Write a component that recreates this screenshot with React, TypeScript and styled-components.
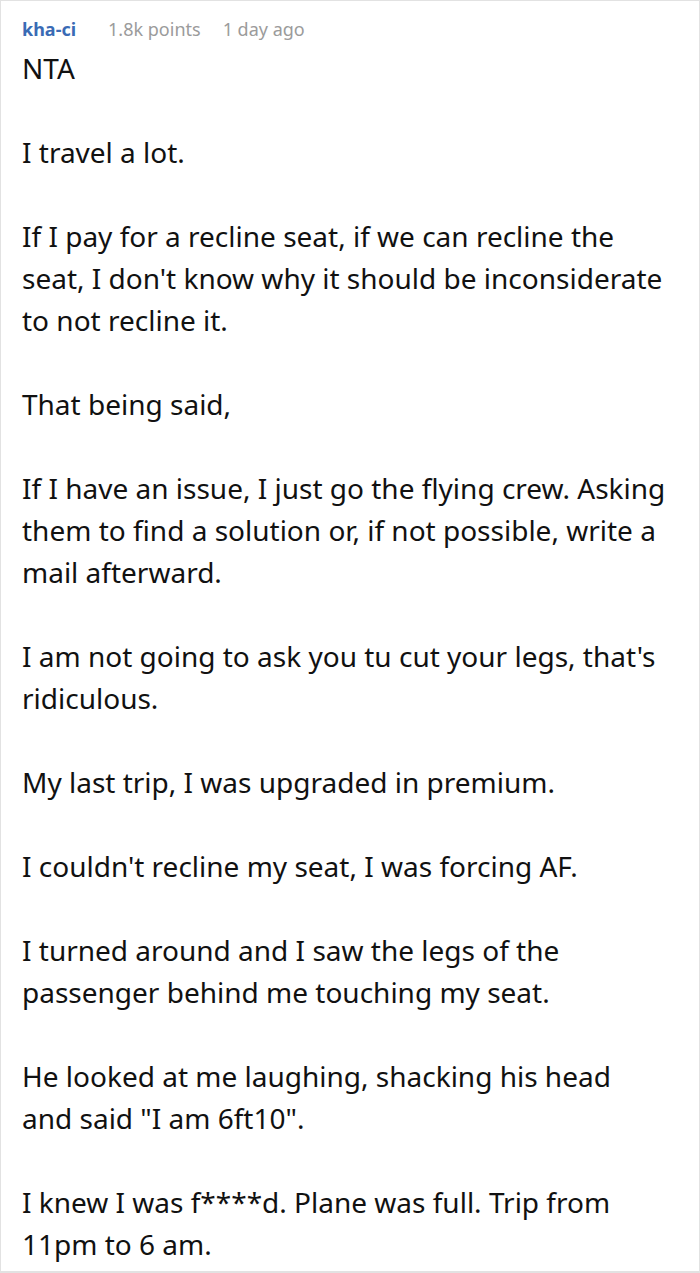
import React from "react";
import styled, { createGlobalStyle } from "styled-components";

const GlobalStyle = createGlobalStyle`
  html, body {
    margin: 0;
    padding: 0;
    background: #ffffff;
  }
`;

const Card = styled.div`
  width: 700px;
  min-height: 1273px;
  box-sizing: border-box;
  border: 1px solid #e2e2e2;
  border-bottom-width: 2px;
  padding: 16px 33px 0 21px;
  font-family: "Noto Sans", "Open Sans", sans-serif;
  color: #111111;
`;

const Meta = styled.div`
  display: flex;
  align-items: baseline;
  gap: 22px;
  height: 32px;
  font-size: 18px;
`;

const Author = styled.span`
  color: #3a6bb5;
  font-weight: 700;
  margin-right: 10px;
`;

const Muted = styled.span`
  color: #9b9b9b;
`;

const Body = styled.div`
  margin-top: -2px;
  font-size: 28px;
  line-height: 42px;
`;

const Para = styled.p`
  margin: 0 0 42px;

  &:last-child {
    margin-bottom: 0;
  }
`;

const paragraphs = [
  "NTA",
  "I travel a lot.",
  "If I pay for a recline seat, if we can recline the seat, I don't know why it should be inconsiderate to not recline it.",
  "That being said,",
  "If I have an issue, I just go the flying crew. Asking them to find a solution or, if not possible, write a mail afterward.",
  "I am not going to ask you tu cut your legs, that's ridiculous.",
  "My last trip, I was upgraded in premium.",
  "I couldn't recline my seat, I was forcing AF.",
  "I turned around and I saw the legs of the passenger behind me touching my seat.",
  'He looked at me laughing, shacking his head and said "I am 6ft10".',
  "I knew I was f****d. Plane was full. Trip from 11pm to 6 am.",
];

const App = () => {
  return (
    <>
      <GlobalStyle />
      <Card>
        <Meta>
          <Author>kha-ci</Author>
          <Muted>1.8k points</Muted>
          <Muted>1 day ago</Muted>
        </Meta>
        <Body>
          {paragraphs.map((text, i) => (
            <Para key={i}>{text}</Para>
          ))}
        </Body>
      </Card>
    </>
  );
};

export default App;
